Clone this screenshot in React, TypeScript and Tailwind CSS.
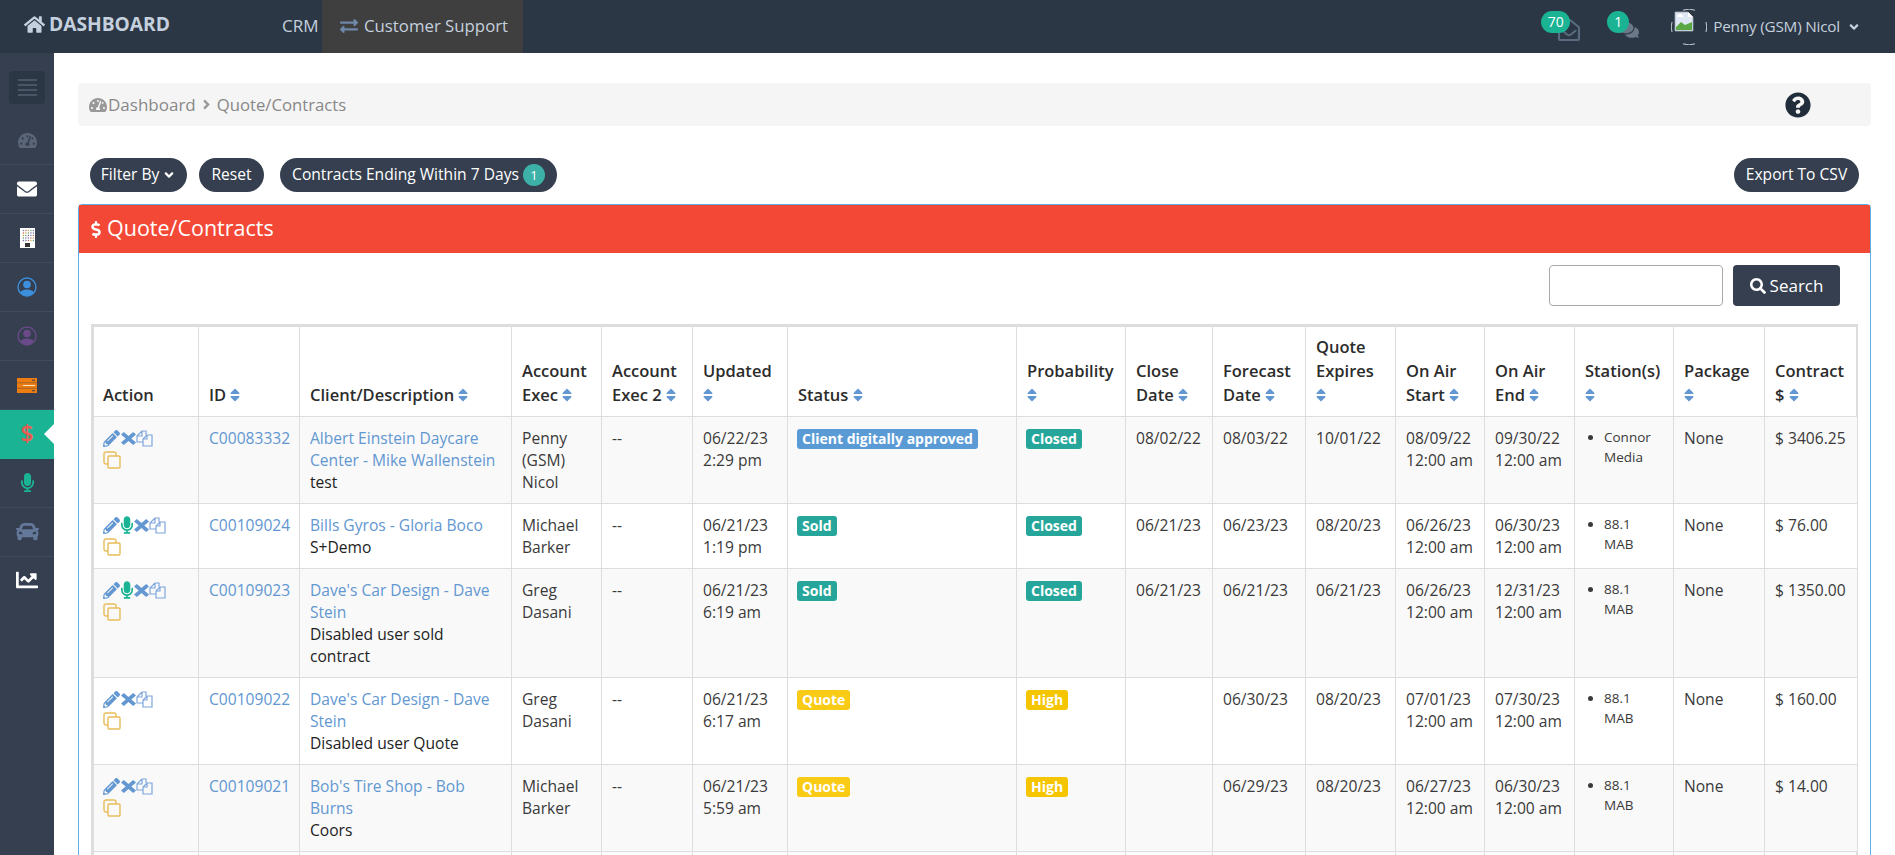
import React from "react";
import {
  FaHome,
  FaExchangeAlt,
  FaTachometerAlt,
  FaEnvelope,
  FaDollarSign,
  FaMicrophone,
  FaCar,
  FaChartLine,
  FaSort,
  FaPencilAlt,
  FaQuestionCircle,
  FaSearch,
  FaRegEnvelopeOpen,
  FaComments,
  FaAngleDown,
  FaAngleRight,
} from "react-icons/fa";

type Row = {
  id: string;
  client: string;
  note: string;
  exec: string;
  updated: [string, string];
  status: string;
  statusTone: string;
  prob: string;
  probTone: string;
  close: string;
  forecast: string;
  expires: string;
  start: string;
  end: string;
  station: string;
  contract: string;
  mic: boolean;
  stripe: boolean;
};

const rows: Row[] = [
  { id: "C00083332", client: "Albert Einstein Daycare Center - Mike Wallenstein", note: "test", exec: "Penny (GSM) Nicol", updated: ["06/22/23", "2:29 pm"], status: "Client digitally approved", statusTone: "bg-[#5b9bd5]", prob: "Closed", probTone: "bg-[#26a69a]", close: "08/02/22", forecast: "08/03/22", expires: "10/01/22", start: "08/09/22", end: "09/30/22", station: "Connor Media", contract: "$ 3406.25", mic: false, stripe: true },
  { id: "C00109024", client: "Bills Gyros - Gloria Boco", note: "S+Demo", exec: "Michael Barker", updated: ["06/21/23", "1:19 pm"], status: "Sold", statusTone: "bg-[#26a69a]", prob: "Closed", probTone: "bg-[#26a69a]", close: "06/21/23", forecast: "06/23/23", expires: "08/20/23", start: "06/26/23", end: "06/30/23", station: "88.1 MAB", contract: "$ 76.00", mic: true, stripe: false },
  { id: "C00109023", client: "Dave's Car Design - Dave Stein", note: "Disabled user sold contract", exec: "Greg Dasani", updated: ["06/21/23", "6:19 am"], status: "Sold", statusTone: "bg-[#26a69a]", prob: "Closed", probTone: "bg-[#26a69a]", close: "06/21/23", forecast: "06/21/23", expires: "06/21/23", start: "06/26/23", end: "12/31/23", station: "88.1 MAB", contract: "$ 1350.00", mic: true, stripe: true },
  { id: "C00109022", client: "Dave's Car Design - Dave Stein", note: "Disabled user Quote", exec: "Greg Dasani", updated: ["06/21/23", "6:17 am"], status: "Quote", statusTone: "bg-[#f9cb14]", prob: "High", probTone: "bg-[#f5c500]", close: "", forecast: "06/30/23", expires: "08/20/23", start: "07/01/23", end: "07/30/23", station: "88.1 MAB", contract: "$ 160.00", mic: false, stripe: false },
  { id: "C00109021", client: "Bob's Tire Shop - Bob Burns", note: "Coors", exec: "Michael Barker", updated: ["06/21/23", "5:59 am"], status: "Quote", statusTone: "bg-[#f9cb14]", prob: "High", probTone: "bg-[#f5c500]", close: "", forecast: "06/29/23", expires: "08/20/23", start: "06/27/23", end: "06/30/23", station: "88.1 MAB", contract: "$ 14.00", mic: false, stripe: true },
];

const colWidths = ["w-[105px]", "w-[101px]", "w-[212px]", "w-[90px]", "w-[91px]", "w-[95px]", "w-[229px]", "w-[109px]", "w-[87px]", "w-[93px]", "w-[90px]", "w-[89px]", "w-[90px]", "w-[99px]", "w-[91px]", "w-[93px]"];

const headers: { label: string; sort?: boolean }[] = [
  { label: "Action" },
  { label: "ID", sort: true },
  { label: "Client/Description", sort: true },
  { label: "Account Exec", sort: true },
  { label: "Account Exec 2", sort: true },
  { label: "Updated", sort: true },
  { label: "Status", sort: true },
  { label: "Probability", sort: true },
  { label: "Close Date", sort: true },
  { label: "Forecast Date", sort: true },
  { label: "Quote Expires", sort: true },
  { label: "On Air Start", sort: true },
  { label: "On Air End", sort: true },
  { label: "Station(s)", sort: true },
  { label: "Package", sort: true },
  { label: "Contract $", sort: true },
];

function BuildingIcon() {
  const dots: React.ReactElement[] = [];
  const colors = ["#6b7fa8", "#c0605a", "#d0a030", "#5aa070", "#8060a0"];
  for (let y = 0; y < 5; y++) {
    for (let x = 0; x < 5; x++) {
      dots.push(<rect key={`${x}-${y}`} x={2.2 + x * 2} y={1.5 + y * 2} width="1" height="1" fill={colors[(x + y) % 5]} />);
    }
  }
  return (
    <svg width="15" height="20" viewBox="0 0 15 20">
      <rect width="15" height="20" fill="#fff" />
      <g transform="scale(1.25)">{dots}</g>
      <rect x="5" y="15" width="5" height="4" fill="#333" />
    </svg>
  );
}

function UserRing({ color }: { color: string }) {
  return (
    <svg width="20" height="20" viewBox="0 0 20 20">
      <defs>
        <clipPath id={`ring-${color}`}>
          <circle cx="10" cy="10" r="9" />
        </clipPath>
      </defs>
      <circle cx="10" cy="10" r="9" fill="none" stroke={color} strokeWidth="1.4" />
      <g clipPath={`url(#ring-${color})`} fill={color}>
        <circle cx="10" cy="7.5" r="3.8" />
        <path d="M2 20c0-5 3-7.5 8-7.5s8 2.5 8 7.5z" />
      </g>
    </svg>
  );
}

function ServerIcon() {
  return (
    <svg width="20" height="15" viewBox="0 0 20 15">
      <rect width="20" height="4.7" fill="#ee7d11" />
      <rect y="5.1" width="20" height="4.8" fill="#ee7d11" />
      <rect y="10.3" width="20" height="4.7" fill="#ee7d11" />
      <rect x="15" y="1.7" width="3" height="1" fill="#353f4f" />
      <rect x="6" y="7" width="12" height="1" fill="#f6e2c8" />
      <rect x="15" y="12.2" width="3" height="1" fill="#353f4f" />
    </svg>
  );
}

function RemoveIcon() {
  return (
    <svg width="15" height="13" viewBox="0 0 16 16" preserveAspectRatio="none" className="shrink-0">
      <polygon points="3,0 8,5 13,0 16,3 11,8 16,13 13,16 8,11 3,16 0,13 5,8 0,3" fill="#6297d1" />
    </svg>
  );
}

function FilesIcon() {
  return (
    <svg width="17" height="17" viewBox="0 0 17 17" fill="none" stroke="#7ea6dc" strokeWidth="1.2" className="shrink-0">
      <path d="M6 1h4v4M6 1 1 6v6h6M6 1v5H1" />
      <path d="M11 5h5v11H7V9zM11 5v4H7" />
    </svg>
  );
}

function CloneIcon() {
  return (
    <svg width="18" height="18" viewBox="0 0 18 18" fill="none" stroke="#e8bd5a" strokeWidth="1.4">
      <path d="M5 13H3a2 2 0 0 1-2-2V3a2 2 0 0 1 2-2h8a2 2 0 0 1 2 2v2" />
      <rect x="5" y="5" width="12" height="12" rx="1" />
    </svg>
  );
}

function Avatar() {
  return (
    <svg width="36" height="36" viewBox="0 0 36 36" className="shrink-0">
      <path d="M12 1.2a17 17 0 0 1 12 0M12 34.8a17 17 0 0 0 12 0M1 13a17 17 0 0 0 0 10M35 13a17 17 0 0 1 0 10" fill="none" stroke="#c6ccd4" strokeWidth="1" />
      <path d="M4 3h13l5 5v14H4z" fill="#dfe7f5" stroke="#9aa3ad" strokeWidth="0.8" />
      <path d="M17 3v5h5z" fill="#fff" />
      <path d="M5 21v-3l5-5 4 3 7-3v8z" fill="#5aa843" />
      <path d="M6 8a3 3 0 0 1 6 0z" fill="#fff" />
    </svg>
  );
}

function SortIcon() {
  return <FaSort className="inline-block w-[10px] h-[16px] text-[#6297d1] align-[-2px]" />;
}

function SideItem({ children, active, divider = true }: { children: React.ReactNode; active?: boolean; divider?: boolean }) {
  return (
    <div className={`relative h-[49px] flex items-center justify-center ${active ? "bg-[#1ab394]" : ""} ${divider && !active ? "border-b border-[#414b5b]" : ""}`}>
      {children}
      {active && <span className="absolute right-0 top-[14px] w-0 h-0 border-y-[10px] border-y-transparent border-r-[10px] border-r-white" />}
    </div>
  );
}

function HeadCell({ label, sort }: { label: string; sort?: boolean }) {
  return (
    <th className="border border-[#ddd] px-[10px] first:pl-[9px] pb-[9px] pt-[8px] align-bottom text-left font-semibold text-[16.5px] leading-[24px] text-[#2c2c2c]">
      {label} {sort && <SortIcon />}
    </th>
  );
}

function Badge({ tone, label }: { tone: string; label: string }) {
  return <span className={`inline-block h-[20px] rounded-[3px] px-[5px] -ml-[1px] align-top mt-[2px] text-[14px] leading-[20px] font-bold text-white ${tone}`}>{label}</span>;
}

function TableRow({ row }: { row: Row }) {
  const cell = "border border-[#ddd] px-[10px] pt-[10px] pb-[10px] align-top text-[15.6px] leading-[22px] text-[#3a3a3a]";
  return (
    <tr className={row.stripe ? "bg-[#f9f9f9]" : "bg-white"}>
      <td className={cell}>
        <div className="flex items-center h-[22px] -ml-[1px]">
          <FaPencilAlt className="text-[17px] text-[#6297d1] mr-[1px] shrink-0" />
          {row.mic && <FaMicrophone className="w-[12px] h-[18px] text-[#1ab394] mr-[1px] shrink-0" />}
          <RemoveIcon />
          <FilesIcon />
        </div>
        <div className="flex items-center h-[22px] -ml-[1px]">
          <CloneIcon />
        </div>
      </td>
      <td className={cell}>
        <a className="text-[#6297d1]">{row.id}</a>
      </td>
      <td className={cell}>
        <a className="text-[#6297d1]">{row.client}</a>
        <div className="text-[#222]">{row.note}</div>
      </td>
      <td className={cell}>{row.exec}</td>
      <td className={cell}>--</td>
      <td className={cell}>
        {row.updated[0]}
        <br />
        {row.updated[1]}
      </td>
      <td className={cell}>
        <Badge tone={row.statusTone} label={row.status} />
      </td>
      <td className={cell}>
        <Badge tone={row.probTone} label={row.prob} />
      </td>
      <td className={cell}>{row.close}</td>
      <td className={cell}>{row.forecast}</td>
      <td className={cell}>{row.expires}</td>
      <td className={cell}>
        {row.start}
        <br />
        12:00 am
      </td>
      <td className={cell}>
        {row.end}
        <br />
        12:00 am
      </td>
      <td className={cell}>
        <ul className="list-disc pl-[19px] text-[13.5px] leading-[20px]">
          <li>{row.station}</li>
        </ul>
      </td>
      <td className={cell}>None</td>
      <td className={cell}>{row.contract}</td>
    </tr>
  );
}

export default function App() {
  return (
    <div className="flex flex-col h-screen overflow-hidden bg-white font-['Open_Sans',sans-serif]">
      <header className="h-[53px] shrink-0 bg-[#2b3745] flex items-stretch text-[#c5d0de]">
        <div className="w-[282px] pl-[24px] flex items-center gap-[4px] font-bold text-[19.2px] pb-[4px]">
          <FaHome className="text-[21px]" />
          DASHBOARD
        </div>
        <div className="flex items-center text-[17px] w-[40px] pb-[2px]">CRM</div>
        <div className="w-[201px] bg-[#3f3f3f] flex items-center pl-[18px] gap-[6px] text-[16.8px] pb-[2px]">
          <FaExchangeAlt className="text-[#6f87a8] text-[18px]" />
          Customer Support
        </div>
        <div className="ml-auto flex items-center pr-[34px]">
          <div className="relative mr-[27px] w-[39px] h-[40px]">
            <FaRegEnvelopeOpen className="absolute right-0 bottom-[6px] text-[22px] text-[#5a6b7f]" />
            <span className="absolute left-0 top-[4px] w-[29px] h-[22px] rounded-full bg-[#1ab394] text-white text-[14px] leading-[22px] text-center">70</span>
          </div>
          <div className="relative mr-[32px] w-[32px] h-[40px]">
            <FaComments className="absolute right-0 bottom-[7px] text-[20px] text-[#6b7888]" />
            <span className="absolute left-0 top-[4px] w-[22px] h-[22px] rounded-full bg-[#1ab394] text-white text-[14px] leading-[22px] text-center">1</span>
          </div>
          <Avatar />
          <span className="ml-[6px] mr-[7px] text-[15.3px] tracking-[-0.2px]">Penny (GSM) Nicol</span>
          <FaAngleDown className="text-[14px]" />
        </div>
      </header>

      <div className="flex flex-1 min-h-0">
        <aside className="w-[54px] shrink-0 bg-[#353f4f]">
          <div className="h-[63px] pt-[18px] flex justify-center">
            <div className="w-[36px] h-[33px] rounded-[4px] bg-[#2b3745] flex flex-col items-center justify-center gap-[3px]">
              <span className="w-[19px] h-[2px] bg-[#4a5565]" />
              <span className="w-[19px] h-[2px] bg-[#4a5565]" />
              <span className="w-[19px] h-[2px] bg-[#4a5565]" />
              <span className="w-[19px] h-[2px] bg-[#4a5565]" />
            </div>
          </div>
          <SideItem><FaTachometerAlt className="text-[19px] text-[#5a6577]" /></SideItem>
          <SideItem><FaEnvelope className="text-[20px] text-white" /></SideItem>
          <SideItem><BuildingIcon /></SideItem>
          <SideItem><UserRing color="#3c8fdc" /></SideItem>
          <SideItem><UserRing color="#6a4a88" /></SideItem>
          <SideItem><ServerIcon /></SideItem>
          <SideItem active><span className="text-[23px] leading-none font-semibold text-[#ef5a50] -mt-[2px]">$</span></SideItem>
          <SideItem><FaMicrophone className="text-[19px] text-[#1ab394] -mt-[2px]" /></SideItem>
          <SideItem><FaCar className="text-[23px] text-[#64789a] -mt-[2px]" /></SideItem>
          <SideItem divider={false}><FaChartLine className="text-[22px] text-white -mt-[3px]" /></SideItem>
        </aside>

        <main className="flex-1 min-w-0 px-[24px] pt-[30px]">
          <div className="h-[43px] bg-[#f5f5f5] rounded-[4px] flex items-center pl-[11px] pr-[60px] text-[17px] text-[#888]">
            <FaTachometerAlt className="text-[18px] text-[#999] mr-[1px]" />
            <span>Dashboard</span>
            <FaAngleRight className="text-[15px] mx-[3px] text-[#999]" />
            <span className="text-[16.7px]">Quote/Contracts</span>
            <FaQuestionCircle className="ml-auto text-[26px] text-[#222d3b]" />
          </div>

          <div className="mt-[32px] h-[34px] px-[12px] flex items-center text-white text-[15.6px] leading-[30px]">
            <button className="h-[34px] w-[97px] rounded-full bg-[#353f4f] flex items-center justify-center gap-[3px] pb-[3px]">
              Filter By <FaAngleDown className="text-[14px] mt-[2px]" />
            </button>
            <button className="ml-[12px] h-[34px] w-[65px] rounded-full bg-[#353f4f] pb-[3px]">Reset</button>
            <button className="ml-[16px] h-[34px] w-[277px] rounded-full bg-[#353f4f] flex items-center justify-center gap-[4px] pb-[3px]">
              Contracts Ending Within 7 Days
              <span className="w-[22px] h-[22px] rounded-full bg-[#3db1a8] text-[13px] leading-[22px] text-center mt-[3px]">1</span>
            </button>
            <button className="ml-auto h-[34px] w-[125px] rounded-full bg-[#353f4f] pb-[3px]">Export To CSV</button>
          </div>

          <section className="mt-[12px] border border-[#5dade2] rounded-t-[4px] pb-[40px]">
            <div className="h-[48px] bg-[#f44837] flex items-center gap-[6px] pl-[12px] pb-[2px] text-white text-[21.5px]">
              <FaDollarSign className="w-[10px] h-[17px] mt-[2px]" />
              Quote/Contracts
            </div>
            <div className="px-[12px]">
              <div className="pt-[12px] pr-[18px] flex justify-end gap-[10px]">
                <input className="w-[174px] h-[41px] rounded-[4px] border border-[#aaa] bg-white" />
                <button className="w-[107px] h-[41px] rounded-[4px] bg-[#353f4f] text-white text-[17px] flex items-center justify-center gap-[4px]">
                  <FaSearch className="text-[16px]" />
                  Search
                </button>
              </div>
              <div className="mt-[18px] border-2 border-[#ddd]">
                <table className="w-full table-fixed border-collapse">
                  <colgroup>
                    {colWidths.map((w, i) => (
                      <col key={i} className={w} />
                    ))}
                  </colgroup>
                  <thead>
                    <tr>
                      {headers.map((h) => (
                        <HeadCell key={h.label} label={h.label} sort={h.sort} />
                      ))}
                    </tr>
                  </thead>
                  <tbody>
                    {rows.map((r) => (
                      <TableRow key={r.id} row={r} />
                    ))}
                    {/* next row starts right at the fold, its text is cut off */}
                    <tr>
                      {headers.map((h) => (
                        <td key={h.label} className="h-[60px] border border-[#ddd]" />
                      ))}
                    </tr>
                  </tbody>
                </table>
              </div>
            </div>
          </section>
        </main>
      </div>
    </div>
  );
}
